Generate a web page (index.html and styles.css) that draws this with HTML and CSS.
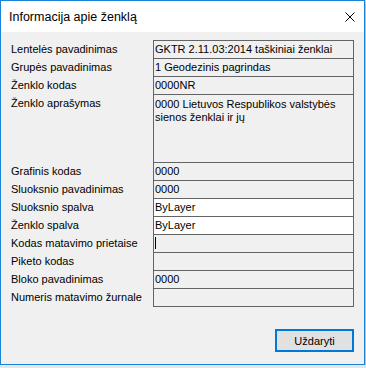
FILE: index.html
```html
<!DOCTYPE html>
<html lang="lt">
<head>
    <meta charset="UTF-8">
    <meta name="viewport" content="width=device-width, initial-scale=1.0">
    <title>Informacija apie ženklą</title>
    <link rel="stylesheet" href="styles.css">
</head>
<body>
    <div class="window">
        <div class="titlebar">
            <span class="title">Informacija apie ženklą</span>
            <svg class="close" width="10" height="10" viewBox="0 0 10 10">
                <path d="M0.5 0.5 L9.5 9.5 M9.5 0.5 L0.5 9.5" stroke="#000" stroke-width="1" fill="none"/>
            </svg>
        </div>

        <div class="content">
            <div class="row">
                <label>Lentelės pavadinimas</label>
                <div class="field">GKTR 2.11.03:2014 taškiniai ženklai</div>
            </div>
            <div class="row">
                <label>Grupės pavadinimas</label>
                <div class="field">1 Geodezinis pagrindas</div>
            </div>
            <div class="row">
                <label>Ženklo kodas</label>
                <div class="field">0000NR</div>
            </div>
            <div class="row">
                <label>Ženklo aprašymas</label>
                <div class="field multi">0000 Lietuvos Respublikos valstybės sienos ženklai ir jų</div>
            </div>
            <div class="row">
                <label>Grafinis kodas</label>
                <div class="field">0000</div>
            </div>
            <div class="row">
                <label>Sluoksnio pavadinimas</label>
                <div class="field">0000</div>
            </div>
            <div class="row">
                <label>Sluoksnio spalva</label>
                <div class="field white">ByLayer</div>
            </div>
            <div class="row">
                <label>Ženklo spalva</label>
                <div class="field white">ByLayer</div>
            </div>
            <div class="row">
                <label>Kodas matavimo prietaise</label>
                <div class="field"><span class="caret"></span></div>
            </div>
            <div class="row">
                <label>Piketo kodas</label>
                <div class="field"></div>
            </div>
            <div class="row">
                <label>Bloko pavadinimas</label>
                <div class="field">0000</div>
            </div>
            <div class="row">
                <label>Numeris matavimo žurnale</label>
                <div class="field"></div>
            </div>

            <div class="actions">
                <button class="close-btn">Uždaryti</button>
            </div>
        </div>
    </div>
</body>
</html>
```

FILE: styles.css
```css
html {
    background: #e6e6e6;
}
body {
    margin: 0;
    font-family: "Liberation Sans", Arial, sans-serif;
    font-size: 11px;
    color: #000;
}
.window {
    width: 365px;
    height: 365px;
    box-sizing: border-box;
    border: 1px solid #1883d7;
    background: #f0f0f0;
    box-shadow: 0 1px 3px rgba(0, 0, 0, 0.45);
}
.titlebar {
    height: 31px;
    background: #fff;
    display: flex;
    align-items: center;
    justify-content: space-between;
    padding: 0 9px 0 8px;
}
.title {
    font-size: 12.5px;
    padding-top: 1px;
}
.close {
    margin-right: 0;
}

.content {
    padding: 9px 9px 0 10px;
}
.row {
    display: flex;
    margin-top: -1px;
}
.row label {
    width: 142px;
    line-height: 19px;
    height: 19px;
}
.field {
    width: 201px;
    height: 19px;
    box-sizing: border-box;
    border: 1px solid #646464;
    padding-left: 1px;
    line-height: 17px;
    white-space: nowrap;
    overflow: hidden;
}
.field.multi {
    height: 69px;
    white-space: normal;
    line-height: 13px;
    padding-top: 3px;
}
.field.white {
    background: #fff;
}
.caret {
    display: inline-block;
    width: 1px;
    height: 12px;
    background: #000;
    vertical-align: middle;
    margin-top: -2px;
}

.actions {
    display: flex;
    justify-content: flex-end;
    margin-top: 22px;
    padding-right: 1px;
}
.close-btn {
    width: 79px;
    height: 23px;
    box-sizing: border-box;
    border: 2px solid #0078d7;
    background: #e1e1e1;
    font-family: "Liberation Sans", Arial, sans-serif;
    font-size: 11px;
    color: #000;
    padding: 0;
}
```
